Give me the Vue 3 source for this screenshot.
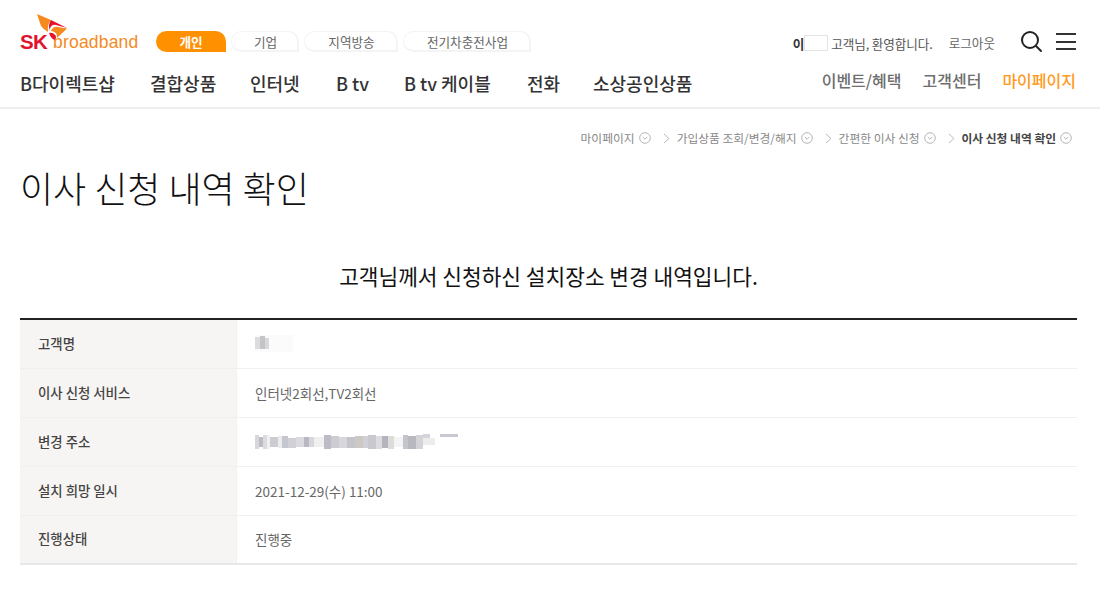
<script setup>
const tabs = [
  { label: '개인', w: 70, on: true },
  { label: '기업', w: 68 },
  { label: '지역방송', w: 94 },
  { label: '전기차충전사업', w: 128 }
]
const nav = [
  { label: 'B다이렉트샵', w: 130 },
  { label: '결합상품', w: 100 },
  { label: '인터넷', w: 86 },
  { label: 'B tv', w: 68 },
  { label: 'B tv 케이블', w: 123 },
  { label: '전화', w: 66 },
  { label: '소상공인상품', w: 100 }
]
const crumbs = [
  { label: '마이페이지' },
  { label: '가입상품 조회/변경/해지' },
  { label: '간편한 이사 신청' },
  { label: '이사 신청 내역 확인', strong: true }
]
const nameBlur = [
  [0, 0, 38, 17, '#fbfbfb'], [0, 2, 5, 12, '#dcdcde'], [5, 1, 5, 13, '#c4c4c8'], [10, 3, 4, 11, '#d8d8da']
]
const addrBlur = [
  [0,1,4,14,'#d8d8dc'],[4,3,4,10,'#bcbcc4'],[8,1,4,14,'#dcdcde'],[12,1,3,14,'#f0f0f0'],[15,3,8,10,'#ccccd2'],[23,2,4,12,'#ececec'],[27,2,6,12,'#c4c6d0'],[33,4,8,10,'#d0d0d6'],
  [41,3,8,10,'#dadae0'],[49,3,5,10,'#b8b8c2'],[54,3,5,10,'#d8d8dc'],[59,3,10,10,'#f0f0f0'],[69,1,7,14,'#bcbcc6'],[76,2,8,12,'#ccccd2'],[84,3,8,11,'#d6d6dc'],
  [92,3,8,11,'#c4c4ca'],[100,2,8,12,'#ccc8c4'],[108,2,5,12,'#d0d0d6'],[113,1,8,14,'#c8c8ce'],[121,2,6,13,'#dcdce0'],[127,2,6,12,'#b4b4be'],
  [133,2,6,13,'#dcdcd8'],[139,3,9,10,'#f4f4f4'],[148,1,5,14,'#c4c4ca'],[153,2,8,13,'#b8b8c0'],[161,1,7,14,'#d4d4d8'],[168,0,7,4,'#d4d4da'],[185,0,18,3,'#c8c8d0'],[168,4,12,7,'#ececec']
]
const rows = [
  { th: '고객명', blur: nameBlur, bw: 40, bh: 17 },
  { th: '이사 신청 서비스', td: '인터넷2회선,TV2회선' },
  { th: '변경 주소', blur: addrBlur, bw: 206, bh: 16 },
  { th: '설치 희망 일시', td: '2021-12-29(수) 11:00' },
  { th: '진행상태', td: '진행중' }
]
</script>

<template>
  <div class="page">
    <header class="header">
      <div class="top">
        <div class="logo">
          <svg class="mark" width="34" height="28" viewBox="0 0 34 28">
            <path d="M1 1 L15 7 Q11 11 12 19 Q7 16 5 13 Z" fill="#f58a1f" />
            <path d="M15 7 L31 15 L20 12 Q15 11 13.500 17 Q12 11 15 7 Z" fill="#e2142d" />
            <path d="M15 18 Q17 13 22 14 L31 15.500 L21 25 Q22 19 15 18 Z" fill="#f58a1f" />
            <path d="M13 20 Q18 19 20 24 L19 27 Q15 26 13 20 Z" fill="#e2142d" />
          </svg>
          <span class="sk">SK</span><span class="bb">broadband</span>
        </div>
        <div class="tabs">
          <a v-for="t in tabs" :key="t.label" class="tab" :class="{ on: t.on }" :style="{ width: t.w + 'px' }">{{ t.label }}</a>
        </div>
        <div class="util">
          <span class="greet"><b>이</b><i class="mask"></i>고객님, 환영합니다.</span>
          <span class="logout">로그아웃</span>
          <svg class="search" width="24" height="24" viewBox="0 0 24 24" fill="none" stroke="#222" stroke-width="2">
            <circle cx="10" cy="10" r="8" />
            <path d="M16 16 L21 21" stroke-linecap="round" />
          </svg>
          <div class="burger"><i></i><i></i><i></i></div>
        </div>
      </div>
      <div class="navrow">
        <nav class="nav">
          <a v-for="n in nav" :key="n.label" :style="{ width: n.w + 'px' }">{{ n.label }}</a>
        </nav>
        <div class="subnav">
          <a>이벤트/혜택</a>
          <a>고객센터</a>
          <a class="my">마이페이지</a>
        </div>
      </div>
    </header>

    <main class="main">
      <div class="crumbs">
        <template v-for="(c, i) in crumbs" :key="c.label">
          <svg v-if="i" class="sep" width="7" height="11" viewBox="0 0 7 11" fill="none" stroke="#bbb" stroke-width="1"><path d="M1 1 L6 5.500 L1 10" /></svg>
          <span class="crumb" :class="{ strong: c.strong }">{{ c.label }}</span>
          <svg class="chev" width="12" height="12" viewBox="0 0 12 12" fill="none" stroke="#b5b5b5" stroke-width="1"><circle cx="6" cy="6" r="5.300" /><path d="M3.800 5 L6 7.200 L8.200 5" /></svg>
        </template>
      </div>
      <h1 class="title">이사 신청 내역 확인</h1>
      <p class="lead">고객님께서 신청하신 설치장소 변경 내역입니다.</p>
      <div class="table">
        <div v-for="r in rows" :key="r.th" class="row">
          <div class="th">{{ r.th }}</div>
          <div class="td">
            <template v-if="r.td">{{ r.td }}</template>
            <svg v-else class="blur" :width="r.bw" :height="r.bh">
              <rect v-for="(b, i) in r.blur" :key="i" :x="b[0]" :y="b[1]" :width="b[2]" :height="b[3]" :fill="b[4]" />
            </svg>
          </div>
        </div>
      </div>
    </main>
  </div>
</template>

<style>
html, body { margin: 0; background: #fff; }
</style>

<style scoped>
.page {
  width: 1100px;
  height: 600px;
  overflow: hidden;
  background: #fff;
  font-family: "Noto Sans CJK KR", "Noto Sans", sans-serif;
  color: #222;
}
.header {
  height: 107px;
  border-bottom: 2px solid #eeeeee;
  padding: 0 24px 0 20px;
}
.top {
  height: 66px;
  display: flex;
  align-items: flex-start;
}
.logo {
  position: relative;
  width: 136px;
  height: 52px;
  flex: none;
  display: flex;
  align-items: flex-end;
  font-family: "Liberation Sans", sans-serif;
  line-height: 1;
}
.mark { position: absolute; left: 16px; top: 13px; }
.sk { color: #e2142d; font-weight: 700; font-size: 20.500px; letter-spacing: -0.6px; width: 33px; }
.bb { color: #f58a1f; font-size: 17.500px; letter-spacing: 0.2px; padding-bottom: 1px; }
.tabs {
  display: flex;
  gap: 5px;
  margin-top: 31px;
}
.tab {
  height: 21px;
  line-height: 20px;
  box-sizing: border-box;
  padding-left: 2px;
  border: 2px solid #f4f4f4;
  border-left-width: 1px;
  border-top-width: 1px;
  border-radius: 11px 11px 0 11px;
  text-align: center;
  font-size: 12.600px;
  color: #666;
}
.tab.on {
  background: #ff9000;
  border: none;
  padding-left: 0;
  color: #fff;
  font-weight: 700;
  line-height: 21px;
}
.util {
  margin-left: auto;
  display: flex;
  align-items: flex-start;
  font-size: 12.600px;
  color: #555;
}
.greet {
  display: flex;
  align-items: center;
  margin-top: 34px;
  height: 18px;
  letter-spacing: -0.1px;
  color: #555;
}
.greet b { color: #333; }
.mask {
  display: block;
  width: 24px;
  height: 16px;
  box-sizing: border-box;
  border: 1px solid #e4e4e4;
  margin: 0 3px 0 0;
}
.logout { margin: 34px 0 0 16px; height: 18px; line-height: 18px; color: #666; }
.search { margin: 30px 0 0 25px; }
.burger {
  margin: 33px 0 0 12px;
  width: 20px;
  height: 17px;
  display: flex;
  flex-direction: column;
  justify-content: space-between;
}
.burger i { display: block; height: 2px; background: #333; }
.navrow {
  display: flex;
  justify-content: space-between;
  align-items: flex-start;
  height: 34px;
}
.nav { display: flex; margin-top: 4px; line-height: 26px; }
.nav a { font-size: 18px; font-weight: 500; color: #333; white-space: nowrap; flex: none; }
.subnav { display: flex; gap: 21px; font-size: 16px; line-height: 24px; margin-top: 2px; font-weight: 500; color: #6e6e6e; }
.subnav .my { color: #ff9a1e; }
.main { padding: 0 23px 0 20px; }
.crumbs {
  display: flex;
  justify-content: flex-end;
  align-items: center;
  height: 16px;
  margin-top: 21px;
  padding-right: 5px;
  font-size: 11.750px;
  color: #888;
}
.crumb { line-height: 16px; }
.crumb.strong { color: #444; font-weight: 700; }
.chev { margin-left: 4px; }
.sep { margin: 0 7px 0 12px; }
.title {
  margin: 16px 0 0;
  font-size: 36px;
  font-weight: 300;
  line-height: 50px;
  color: #111;
}
.lead {
  margin: 49px 0 0;
  text-align: center;
  font-size: 21.400px;
  line-height: 30px;
  font-weight: 400;
  color: #111;
}
.table {
  margin-top: 27px;
  border-top: 2px solid #222;
  border-bottom: 2px solid #e8e8e8;
}
.row {
  display: flex;
  height: 49px;
  box-sizing: border-box;
  border-bottom: 1px solid #f0f0f0;
}
.row:last-child { border-bottom: none; height: 47px; }
.th {
  width: 217px;
  flex: none;
  box-sizing: border-box;
  padding: 0 0 3px 18px;
  background: #f7f5f3;
  border-right: 1px solid #f0f0f0;
  font-size: 13.400px;
  font-weight: 500;
  color: #444;
  display: flex;
  align-items: center;
}
.td {
  padding: 0 0 1px 18px;
  font-size: 13.500px;
  color: #666;
  display: flex;
  align-items: center;
}
.blur { display: block; filter: blur(0.7px); }
</style>
